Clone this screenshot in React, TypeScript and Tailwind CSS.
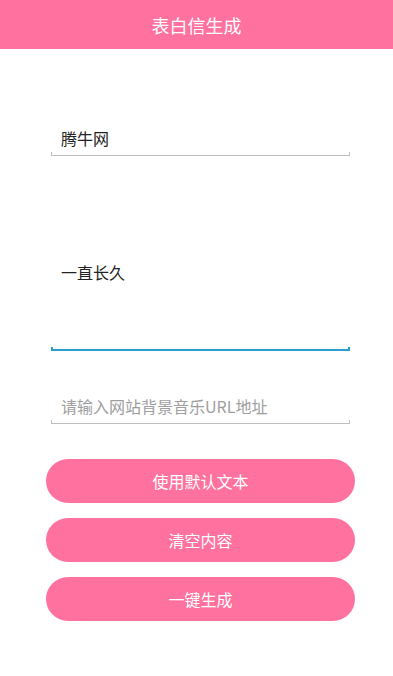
import React from 'react';

const font = { fontFamily: '"Noto Sans CJK SC", "Noto Sans", sans-serif' };

function Underline({ active }: { active?: boolean }) {
  return active ? (
    <div className="h-[4px] border-x-2 border-b-2 border-[#2a9fd0]" />
  ) : (
    <div className="h-[4px] border-x border-b border-[#bdbdbd]" />
  );
}

export default function App() {
  const buttons = ['使用默认文本', '清空内容', '一键生成'];
  return (
    <div className="w-[393px] h-[676px] bg-white flex flex-col" style={font}>
      {/* Title bar */}
      <div className="h-[49px] bg-[#ff719e] flex items-center justify-center shrink-0">
        <span className="text-[18px] text-white leading-none">表白信生成</span>
      </div>

      <div className="pl-[51px] pr-[43px] flex flex-col">
        {/* Site name */}
        <div className="mt-[77px] flex flex-col">
          <div className="h-[24px] pl-[10px] text-[16px] leading-[24px] text-[#222]">腾牛网</div>
          <div className="h-[2px]" />
          <Underline />
        </div>

        {/* Message */}
        <div className="mt-[104px] flex flex-col">
          <div className="h-[24px] pl-[10px] text-[16px] leading-[24px] text-[#222]">一直长久</div>
          <div className="h-[63px]" />
          <Underline active />
        </div>

        {/* Music URL */}
        <div className="mt-[43px] flex flex-col">
          <div className="h-[24px] pl-[10px] text-[16px] leading-[24px] text-[#9e9e9e]">请输入网站背景音乐URL地址</div>
          <div className="h-[2px]" />
          <Underline />
        </div>
      </div>

      {/* Actions */}
      <div className="mt-[35px] pl-[46px] pr-[38px] flex flex-col gap-[15px]">
        {buttons.map((b) => (
          <button
            key={b}
            className="h-[44px] w-full rounded-full bg-[#ff719e] text-white text-[16px] flex items-center justify-center"
          >
            {b}
          </button>
        ))}
      </div>
    </div>
  );
}
